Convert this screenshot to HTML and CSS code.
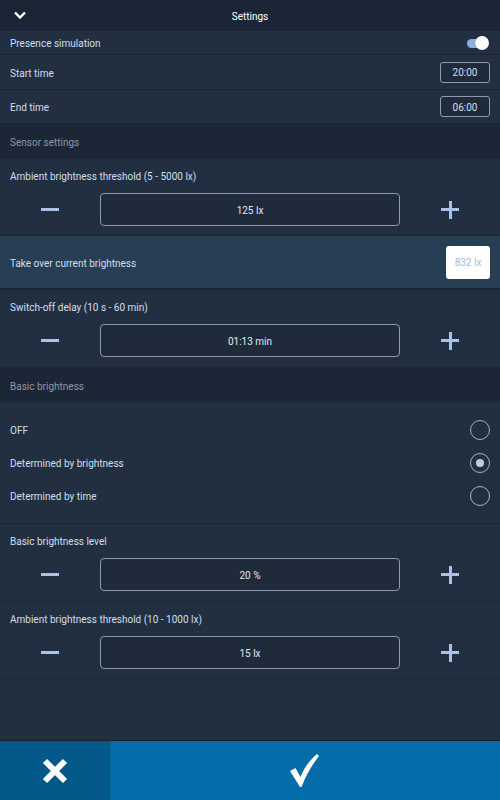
FILE: index.html
```
<!DOCTYPE html>
<html>
<head>
<meta charset="utf-8">
<link rel="stylesheet" href="styles.css">
</head>
<body>
<div class="app">
  <header class="topbar">
    <svg class="chev" width="14" height="10" viewBox="0 0 14 10"><path d="M2 2.5 L7 7.5 L12 2.5" fill="none" stroke="#ffffff" stroke-width="2.4"/></svg>
    <div class="title">Settings</div>
  </header>
  <div class="row r-presence">
    <span class="label">Presence simulation</span>
    <span class="toggle"><span class="track"></span><span class="knob"></span></span>
  </div>
  <div class="row r-time">
    <span class="label">Start time</span>
    <span class="timebox">20:00</span>
  </div>
  <div class="row r-time r-end">
    <span class="label">End time</span>
    <span class="timebox">06:00</span>
  </div>
  <div class="section"><span class="label">Sensor settings</span></div>
  <div class="stepper">
    <div class="label">Ambient brightness threshold (5 - 5000 lx)</div>
    <div class="ctrl">
      <span class="btn"><span class="minus"></span></span>
      <span class="valbox">125 lx</span>
      <span class="btn"><span class="plus"></span></span>
    </div>
  </div>
  <div class="row r-take">
    <span class="label">Take over current brightness</span>
    <span class="luxbox">832 lx</span>
  </div>
  <div class="stepper tall">
    <div class="label">Switch-off delay (10 s - 60 min)</div>
    <div class="ctrl">
      <span class="btn"><span class="minus"></span></span>
      <span class="valbox">01:13 min</span>
      <span class="btn"><span class="plus"></span></span>
    </div>
  </div>
  <div class="section s2"><span class="label">Basic brightness</span></div>
  <div class="radios">
    <div class="radio-row"><span class="label">OFF</span><span class="radio"></span></div>
    <div class="radio-row"><span class="label">Determined by brightness</span><span class="radio on"></span></div>
    <div class="radio-row"><span class="label">Determined by time</span><span class="radio"></span></div>
  </div>
  <div class="stepper tall">
    <div class="label">Basic brightness level</div>
    <div class="ctrl">
      <span class="btn"><span class="minus"></span></span>
      <span class="valbox">20 %</span>
      <span class="btn"><span class="plus"></span></span>
    </div>
  </div>
  <div class="stepper">
    <div class="label">Ambient brightness threshold (10 - 1000 lx)</div>
    <div class="ctrl">
      <span class="btn"><span class="minus"></span></span>
      <span class="valbox">15 lx</span>
      <span class="btn"><span class="plus"></span></span>
    </div>
  </div>
  <footer class="footer">
    <div class="cancel">
      <svg width="28" height="28" viewBox="0 0 28 28"><path d="M4 4 L24 24 M24 4 L4 24" stroke="#ffffff" stroke-width="6" fill="none"/></svg>
    </div>
    <div class="ok">
      <svg width="32" height="36" viewBox="0 0 32 36"><path d="M1 18 L6.5 15 L11.5 24 C15.5 14 21 7 28 1 L30 3 C23 12 17 22 12.5 34 L11 34 Z" fill="#ffffff"/></svg>
    </div>
  </footer>
</div>
</body>
</html>
```
FILE: styles.css
```
* { box-sizing: border-box; }
html, body { margin: 0; padding: 0; }
body {
  width: 500px;
  height: 800px;
  background: #212f40;
  font-family: Roboto, "Liberation Sans", sans-serif;
  font-size: 10px;
  color: #d3dfee;
  overflow: hidden;
}
.app {
  display: flex;
  flex-direction: column;
  height: 800px;
}
.topbar {
  height: 31px;
  background: #1b2535;
  display: flex;
  align-items: center;
  justify-content: center;
  position: relative;
}
.chev { position: absolute; left: 13px; top: 10px; }
.title { color: #ffffff; font-size: 10px; padding-top: 1px; }
.label { padding-top: 2px; }
.row {
  display: flex;
  align-items: center;
  justify-content: space-between;
  padding: 0 10px;
  border-bottom: 1px solid #1a2432;
}
.r-presence { height: 24px; }
.r-time { height: 35px; }
.r-end { height: 34px; }
.toggle { position: relative; width: 24px; height: 14px; }
.track {
  position: absolute; left: 1px; top: 3px;
  width: 18px; height: 9px; border-radius: 5px;
  background: #8eaedb;
}
.knob {
  position: absolute; left: 9px; top: 0px;
  width: 14px; height: 14px; border-radius: 50%;
  background: #ffffff;
  box-shadow: 0 0 1px rgba(0,0,0,0.5);
}
.timebox {
  width: 50px; height: 21px;
  border: 1px solid #8b9bb0;
  border-radius: 3px;
  display: flex; align-items: center; justify-content: center;
  padding-top: 1px;
  color: #d3dfee;
  background: #1f2b3b;
}
.section {
  height: 35px;
  background: #1b2636;
  display: flex; align-items: center;
  padding: 0 10px;
  color: #8c98a8;
}
.s2 { height: 34px; }
.stepper {
  height: 77px;
  padding: 9px 0 0 0;
  border-bottom: 1px solid #1c2634;
}
.stepper.tall { height: 78px; }
.stepper .label { padding-left: 10px; height: 16px; line-height: 16px; padding-top: 1px; }
.ctrl {
  display: flex; align-items: center;
  margin-top: 9px;
  height: 33px;
}
.btn { width: 100px; height: 33px; display: flex; align-items: center; justify-content: center; }
.minus { width: 18px; height: 3px; background: #a9c2e5; }
.plus { width: 18px; height: 18px; position: relative; }
.plus::before, .plus::after { content: ""; position: absolute; background: #a9c2e5; }
.plus::before { left: 0; top: 7.5px; width: 18px; height: 3px; }
.plus::after { left: 7.5px; top: 0; width: 3px; height: 18px; }
.valbox {
  width: 300px; height: 33px;
  border: 1px solid #8b9bb0;
  border-radius: 4px;
  display: flex; align-items: center; justify-content: center;
  padding-top: 1px;
  color: #e2e8f0;
  background: #1f2b3b;
}
.r-take {
  height: 54px;
  background: #283e55;
  border-bottom: 2px solid #1b2535;
}
.luxbox {
  width: 44px; height: 33px;
  background: #ffffff;
  border-radius: 3px;
  display: flex; align-items: center; justify-content: center;
  padding-top: 1px;
  color: #a3bce0;
}
.radios {
  padding: 11px 0 11px 0;
  border-bottom: 1px solid #1a2432;
}
.radio-row {
  height: 33px;
  display: flex; align-items: center; justify-content: space-between;
  padding: 0 10px;
}
.radio {
  width: 20px; height: 20px; border-radius: 50%;
  border: 1.5px solid #9fb4cc;
  display: flex; align-items: center; justify-content: center;
}
.radio.on::after {
  content: ""; width: 8px; height: 8px; border-radius: 50%; background: #b5cdee;
}
.footer {
  margin-top: auto;
  height: 60px;
  display: flex;
  border-top: 1px solid #14202c;
}
.cancel {
  width: 110px; background: #03588a;
  display: flex; align-items: center; justify-content: center;
}
.ok {
  flex: 1; background: #036ca9;
  display: flex; align-items: center; justify-content: center;
}
```
